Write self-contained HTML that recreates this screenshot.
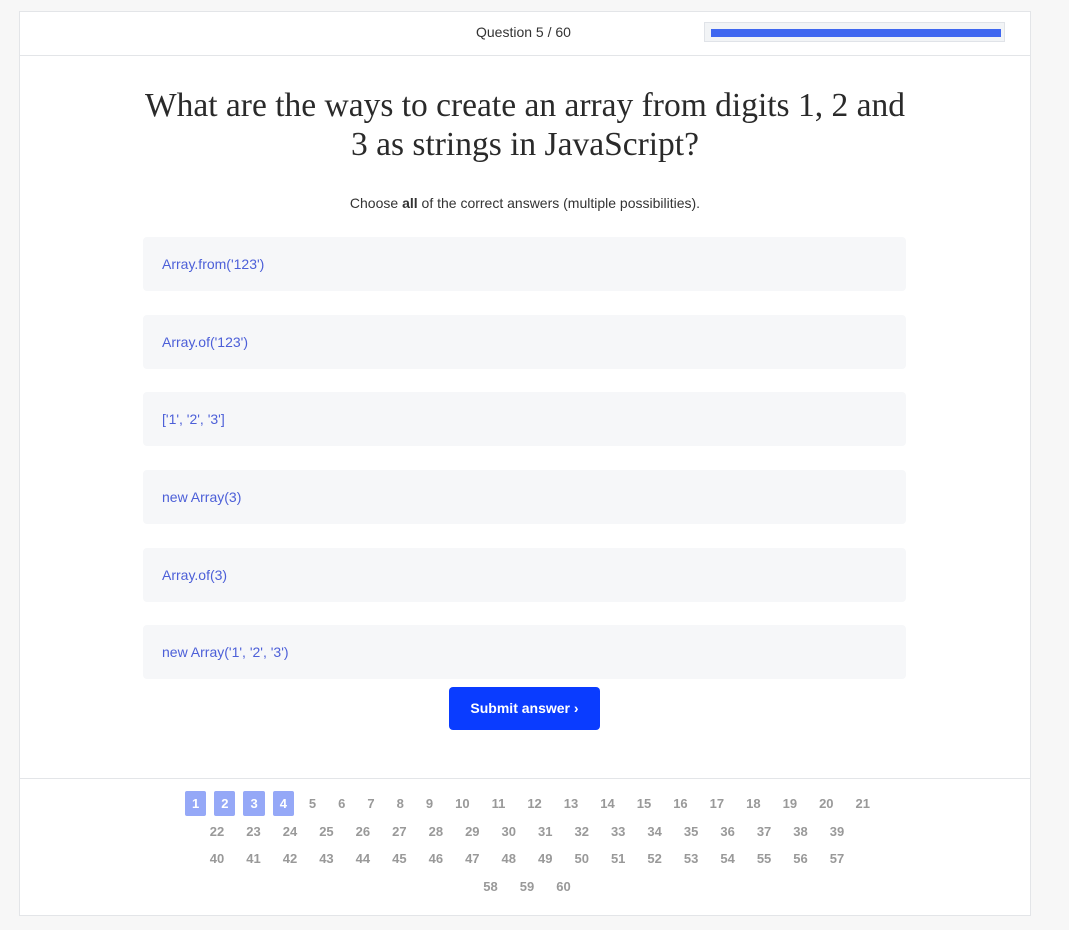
<!DOCTYPE html>
<html><head><meta charset="utf-8"><style>
body{margin:0;background:#f7f7f7;font-family:"Liberation Sans",Arial,sans-serif;width:1069px;height:930px;overflow:hidden}
.card{position:absolute;left:19px;top:11px;width:1010px;height:903px;background:#fff;border:1px solid #e3e5e8}
.hdr{height:43px;border-bottom:1px solid #e3e5e8;position:relative}
.qn{position:absolute;left:456px;top:12px;font-size:14px;color:#333}
.bar{position:absolute;left:684px;top:10px;width:301px;height:20px;background:#f2f4f6;border:1px solid #e0e3e8;box-sizing:border-box}
.bar i{position:absolute;left:6px;top:6px;width:290px;height:8px;background:#3f67f0}
h1{position:absolute;left:80px;width:850px;top:74px;margin:0;text-align:center;font-family:"Liberation Serif",Georgia,serif;font-weight:normal;font-size:33.5px;line-height:39px;color:#2a2a2a}
.sub{position:absolute;left:0;width:1010px;top:183px;text-align:center;font-size:14px;color:#333}
.opt{position:absolute;left:123px;width:763px;height:54px;background:#f6f7f9;border-radius:4px;color:#4c5fd8;font-size:14px;line-height:54px;box-sizing:border-box;padding-left:19px}
.btn{position:absolute;left:429px;top:675px;width:151px;height:43px;background:#0a3cff;border-radius:4px;color:#fff;font-weight:bold;font-size:14px;line-height:43px;text-align:center}
.ftr{position:absolute;left:0;right:0;top:766px;border-top:1px solid #e3e5e8}
.pg{position:absolute;left:2px;width:1010px;top:778px;text-align:center;font-size:13px;font-weight:bold;color:#999}
.pg div{height:27.5px;line-height:27.5px;white-space:nowrap}
.pg span{display:inline-block;padding:0 7px;margin:0 4px;line-height:25px}
.pg span.a{background:#95a8f7;color:#fff;border-radius:2px}
</style></head><body>
<div class="card">
<div class="hdr"><div class="qn">Question 5 / 60</div><div class="bar"><i></i></div></div>
<h1>What are the ways to create an array from digits 1, 2 and<br>3 as strings in JavaScript?</h1>
<div class="sub">Choose <b>all</b> of the correct answers (multiple possibilities).</div>
<div class="opt" style="top:225px">Array.from('123')</div>
<div class="opt" style="top:303px">Array.of('123')</div>
<div class="opt" style="top:380px">['1', '2', '3']</div>
<div class="opt" style="top:458px">new Array(3)</div>
<div class="opt" style="top:536px">Array.of(3)</div>
<div class="opt" style="top:613px">new Array('1', '2', '3')</div>
<div class="btn">Submit answer ›</div>
<div class="ftr"></div>
<div class="pg">
<div style="margin-left:8px"><span class="a">1</span><span class="a">2</span><span class="a">3</span><span class="a">4</span><span>5</span><span>6</span><span>7</span><span>8</span><span>9</span><span>10</span><span>11</span><span>12</span><span>13</span><span>14</span><span>15</span><span>16</span><span>17</span><span>18</span><span>19</span><span>20</span><span>21</span></div>
<div><span>22</span><span>23</span><span>24</span><span>25</span><span>26</span><span>27</span><span>28</span><span>29</span><span>30</span><span>31</span><span>32</span><span>33</span><span>34</span><span>35</span><span>36</span><span>37</span><span>38</span><span>39</span></div>
<div><span>40</span><span>41</span><span>42</span><span>43</span><span>44</span><span>45</span><span>46</span><span>47</span><span>48</span><span>49</span><span>50</span><span>51</span><span>52</span><span>53</span><span>54</span><span>55</span><span>56</span><span>57</span></div>
<div><span>58</span><span>59</span><span>60</span></div>
</div>
</div>
</body></html>
